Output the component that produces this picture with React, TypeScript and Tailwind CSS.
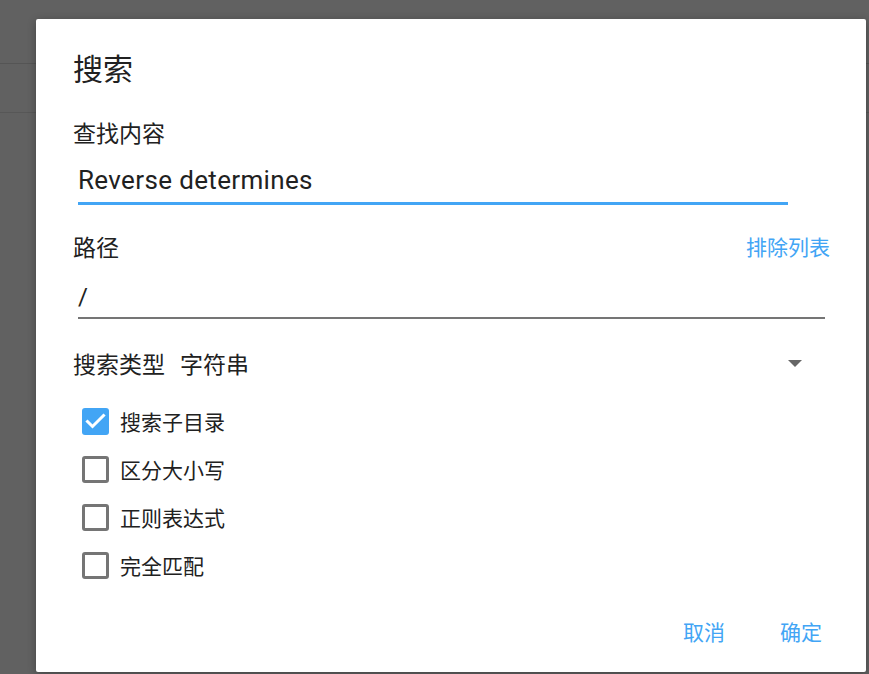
import React from 'react'

// ================================
// CONSTANTS
// ================================

const CJK = { fontFamily: '"Noto Sans CJK SC", "Noto Sans", sans-serif' }
const LATIN = { fontFamily: 'Roboto, "Noto Sans CJK SC", sans-serif' }

const OPTIONS = [
  { label: '搜索子目录', checked: true },
  { label: '区分大小写', checked: false },
  { label: '正则表达式', checked: false },
  { label: '完全匹配', checked: false },
]

// ================================
// PIECES
// ================================

const Checkbox: React.FC<{ checked: boolean }> = ({ checked }) =>
  checked ? (
    <div className="w-[27px] h-[27px] rounded-[3px] bg-[#42a5f5] flex items-center justify-center">
      <svg width="27" height="27" viewBox="0 0 27 27">
        <polyline
          points="5.5,13.5 10.5,18.5 21.5,7.5"
          fill="none"
          stroke="#fff"
          strokeWidth="3"
          strokeLinecap="square"
        />
      </svg>
    </div>
  ) : (
    <div className="w-[27px] h-[27px] rounded-[3px] border-[3px] border-[#757575] bg-white" />
  )

// ================================
// MAIN
// ================================

export default function App() {
  return (
    <div className="relative w-[869px] h-[674px] overflow-hidden bg-[#616161]">
      {/* page behind the modal */}
      <div className="h-[64px] border-b border-[#555555]" />
      <div className="h-[49px] border-b border-[#575757]" />

      {/* dialog */}
      <div className="absolute left-[36px] top-[19px] w-[830px] h-[653px] bg-white rounded-[2px] shadow-[0_2px_8px_rgba(0,0,0,0.3)] flex flex-col pl-[37px] pr-[36px] pt-[30px]">
        <h2 className="text-[30px] leading-[36px] text-[#212121]" style={CJK}>
          搜索
        </h2>

        <div className="mt-[33px] text-[23px] leading-[28px] text-[#212121]" style={CJK}>
          查找内容
        </div>
        <div className="mt-[18px] ml-[5px] w-[710px] pb-[6px] border-b-[3px] border-[#42a5f5]">
          <div className="text-[26px] leading-[32px] tracking-[0.35px] text-[#212121]" style={LATIN}>
            Reverse determines
          </div>
        </div>

        <div className="mt-[27px] flex items-center justify-between">
          <span className="text-[23px] leading-[28px] text-[#212121]" style={CJK}>
            路径
          </span>
          <span className="text-[21px] leading-[28px] text-[#42a5f5]" style={CJK}>
            排除列表
          </span>
        </div>
        <div className="mt-[21px] ml-[5px] w-[747px] pb-[4px] border-b-2 border-[#757575]">
          <div className="text-[24px] leading-[32px] text-[#212121]" style={LATIN}>
            /
          </div>
        </div>

        <div className="mt-[30px] flex items-center">
          <span className="text-[23px] leading-[28px] text-[#212121]" style={CJK}>
            搜索类型
          </span>
          <span className="ml-[15px] text-[23px] leading-[28px] text-[#212121]" style={CJK}>
            字符串
          </span>
          <svg className="ml-auto mr-[28px]" width="14" height="7" viewBox="0 0 14 7">
            <polygon points="0,0 14,0 7,7" fill="#666666" />
          </svg>
        </div>

        <div className="mt-[20px] flex flex-col">
          {OPTIONS.map((opt) => (
            <div key={opt.label} className="h-[48px] flex items-center pl-[9px]">
              <Checkbox checked={opt.checked} />
              <span className="ml-[11px] text-[21px] leading-[28px] text-[#212121]" style={CJK}>
                {opt.label}
              </span>
            </div>
          ))}
        </div>

        <div className="mt-[28px] flex justify-end gap-[55px] pr-[8px]">
          <span className="text-[21px] leading-[28px] text-[#42a5f5]" style={CJK}>
            取消
          </span>
          <span className="text-[21px] leading-[28px] text-[#42a5f5]" style={CJK}>
            确定
          </span>
        </div>
      </div>
    </div>
  )
}
